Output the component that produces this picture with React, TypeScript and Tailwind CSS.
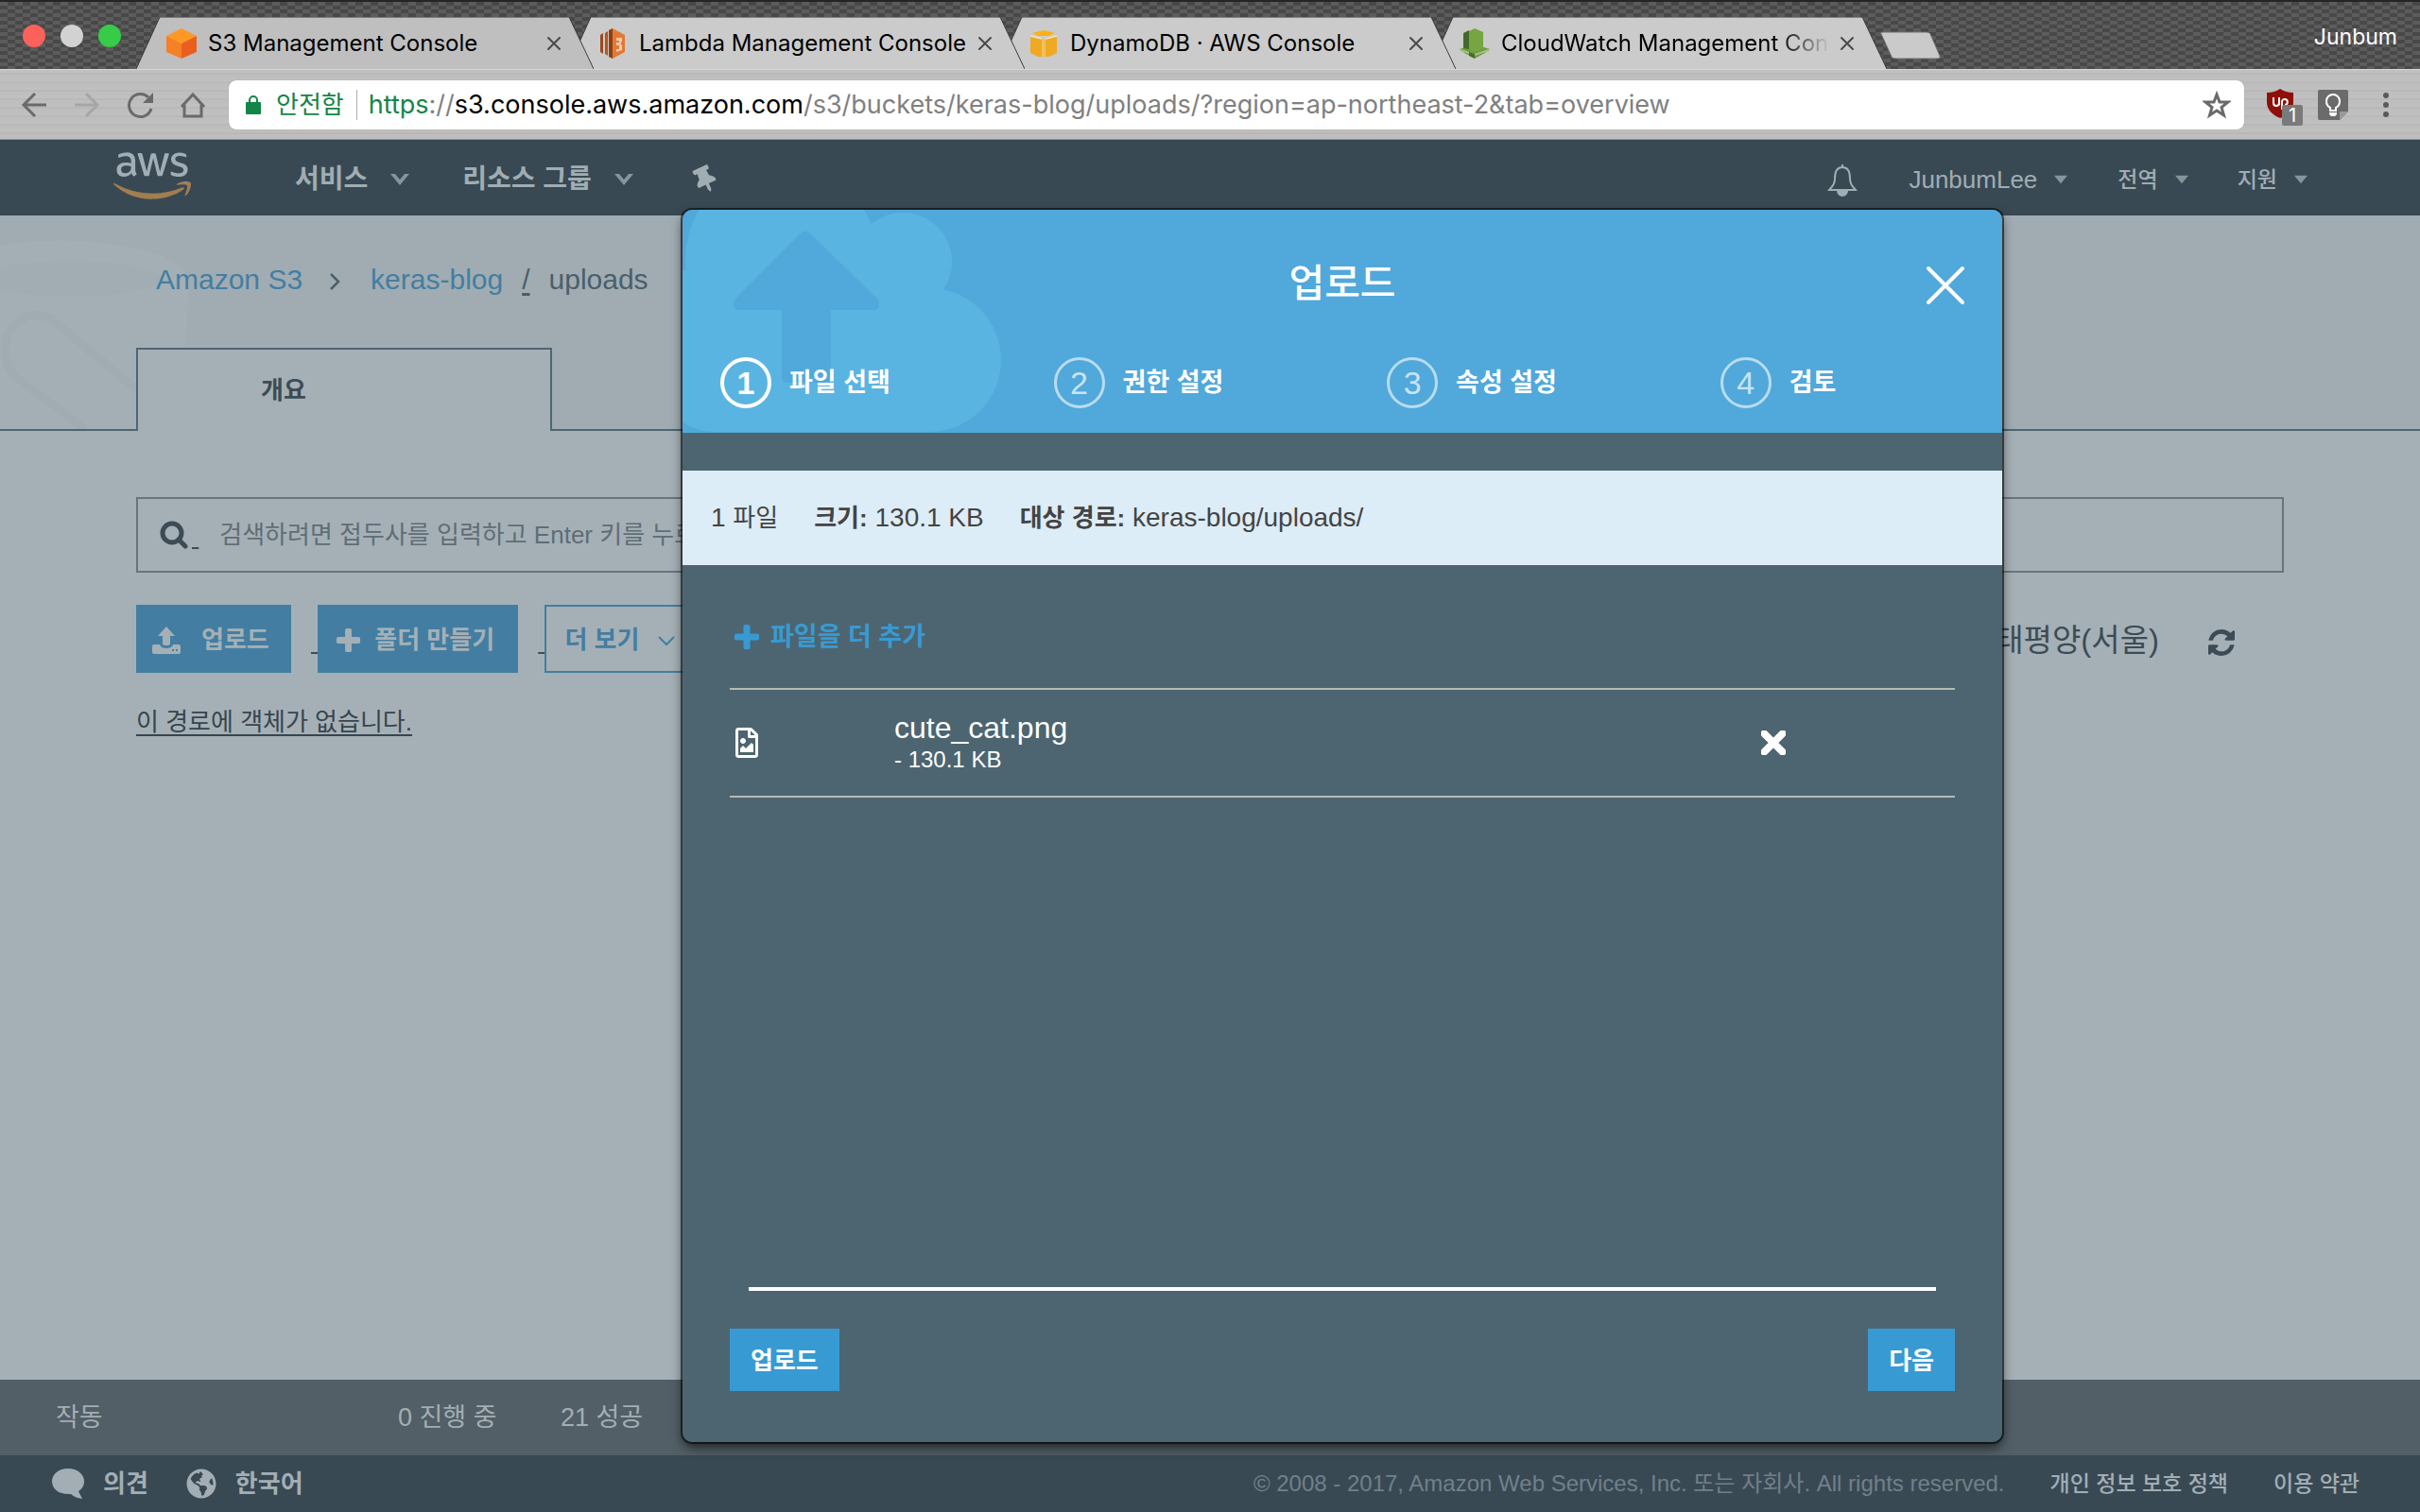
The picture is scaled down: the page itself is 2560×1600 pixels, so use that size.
import type { ReactNode } from "react";
import { FaAws, FaGlobeAmericas, FaRegFileImage, FaThumbtack } from "react-icons/fa";

const SANS = "font-['Liberation_Sans','Noto_Sans_CJK_KR',sans-serif]";
const CHROME = "font-['Inter','Noto_Sans_CJK_KR',sans-serif]";

/* ---------- icons ---------- */

function CubeIcon() {
  return (
    <svg viewBox="0 0 32 32" className="size-8">
      <path d="M16 0 32 8 16 16 0 8z" fill="#fd9827" />
      <path d="M0 8 16 16V32L0 25z" fill="#f58025" />
      <path d="M32 8 16 16V32L32 25z" fill="#ea5f1e" />
    </svg>
  );
}

function LambdaIcon() {
  return (
    <svg viewBox="0 0 32 32" className="size-8">
      <path d="M3 7 6 5V27L3 25z" fill="#9c4a1c" />
      <path d="M8 5 11 3V29L8 27z" fill="#b3561f" />
      <path d="M12 2 16 0V32L12 30z" fill="#8e3f14" />
      <path d="M16 0 29 7V25L16 32z" fill="#e27a35" />
      <path d="M20 10h6v4l-2 2 2 2v5l-6 2v-3h3v-4h-3v-3h3v-2h-3z" fill="#f7c9a8" />
    </svg>
  );
}

function DynamoIcon() {
  return (
    <svg viewBox="0 0 32 32" className="size-8">
      <path d="M2 8V26L10 30H22L30 26V8L22 11H10z" fill="#efa925" />
      <path d="M16 2 28 5 22 8H10L4 5z" fill="#fbb116" />
      <path d="M14 11h4v19h-4z" fill="#f5bf5c" />
      <path d="M2 8 14 11M30 8 18 11" stroke="#f8e0b0" strokeWidth="1.5" />
    </svg>
  );
}

function WatchIcon() {
  return (
    <svg viewBox="0 0 32 32" className="size-8">
      <path d="M0 22 16 17 32 22 27 26 16 32 5 26z" fill="#6f9a45" />
      <path d="M1 23 16 28 31 23" stroke="#a3c47d" strokeWidth="2" fill="none" />
      <path d="M4 5 10 2V22L4 21z" fill="#45692c" />
      <path d="M10 3 16 0 25 4V21L16 25 10 22z" fill="#76a641" />
      <path d="M16 27V32L10 29V25z" fill="#4b6a2b" />
    </svg>
  );
}

function CloseGlyph({ className, width }: { className: string; width: number }) {
  return (
    <svg viewBox="0 0 24 24" className={className} fill="none" stroke="currentColor" strokeWidth={width} strokeLinecap="round">
      <path d="M3 3 21 21M21 3 3 21" />
    </svg>
  );
}

function PlusIcon({ className }: { className: string }) {
  return (
    <svg viewBox="0 0 1408 1408" className={className} fill="currentColor">
      <path d="M1408 608v192q0 40-28 68t-68 28H896v416q0 40-28 68t-68 28H608q-40 0-68-28t-28-68V896H96q-40 0-68-28T0 800V608q0-40 28-68t68-28h416V96q0-40 28-68T608 0h192q40 0 68 28t28 68v416h416q40 0 68 28t28 68z" />
    </svg>
  );
}

function RefreshIcon() {
  return (
    <svg viewBox="0 0 1536 1536" className="size-7" fill="currentColor">
      <path d="M1511 928q0 5-1 7-64 268-268 434.5t-478 166.500q-146 0-282.500-55t-243.500-157l-129 129q-19 19-45 19t-45-19-19-45v-448q0-26 19-45t45-19h448q26 0 45 19t19 45-19 45l-137 137q71 66 161 102t187 36q134 0 250-65t186-179q11-17 53-117 8-23 30-23h192q13 0 22.500 9.500t9.500 22.500zm25-800v448q0 26-19 45t-45 19h-448q-26 0-45-19t-19-45 19-45l138-138q-148-137-349-137-134 0-250 65t-186 179q-11 17-53 117-8 23-30 23h-199q-13 0-22.500-9.500t-9.500-22.500v-7q65-268 270-434.500t480-166.500q146 0 284 55.500t245 156.500l130-129q19-19 45-19t45 19 19 45z" />
    </svg>
  );
}

function Caret({ small = false }: { small?: boolean }) {
  return (
    <svg viewBox="0 0 20 14" className={small ? "h-[10px] w-[14px]" : "h-[14px] w-5"} fill="#87949b">
      {small ? <path d="M0 1h20L10 13z" /> : <path d="M0 1h5l5 6 5-6h5L10 13z" />}
    </svg>
  );
}

/* ---------- browser window ---------- */

const TABS: { title: string; icon: ReactNode; z: string; fade?: boolean }[] = [
  { title: "S3 Management Console", icon: <CubeIcon />, z: "z-40" },
  { title: "Lambda Management Console", icon: <LambdaIcon />, z: "z-30" },
  { title: "DynamoDB · AWS Console", icon: <DynamoIcon />, z: "z-20" },
  { title: "CloudWatch Management Console", icon: <WatchIcon />, z: "z-10", fade: true },
];

function BrowserTabs() {
  return (
    <div className="relative flex h-[73px] items-end border-t-2 border-[#242424] bg-[#555] bg-[repeating-conic-gradient(#484848_0_25%,#5c5c5c_0_50%)] bg-size-[16px_8px]">
      <div className="flex w-[144px] shrink-0 gap-4 self-center pl-6">
        <button aria-label="닫기" className="size-6 rounded-full bg-[#fc615c]" />
        <button aria-label="최소화" className="size-6 rounded-full bg-[#d2d2d2]" />
        <button aria-label="최대화" className="size-6 rounded-full bg-[#36cc48]" />
      </div>
      <div role="tablist" className="flex">
        {TABS.map((tab, i) => (
          <div key={tab.title} className={`relative flex h-[55px] w-[484px] items-center pl-8 ${i ? "-ml-7" : ""} ${tab.z}`}>
            <svg viewBox="0 0 484 55" className="absolute inset-0 size-full" fill={i ? "#cbcbcb" : "#bfbfbf"}>
              <path d="M0 55 25 0H458L484 55z" />
              <path d="M0 55 25 0H458L484 55" fill="none" stroke="#3c3c3c" strokeWidth="1" />
            </svg>
            <button
              role="tab"
              aria-selected={i === 0}
              className={`relative flex w-[392px] items-center gap-3 whitespace-nowrap text-2xl text-black ${tab.fade ? "overflow-hidden mask-r-from-86%" : ""}`}
            >
              <span className="shrink-0">{tab.icon}</span>
              {tab.title}
            </button>
            <button aria-label="탭 닫기" className="relative ml-[10px] text-[#4a4a4a]">
              <CloseGlyph className="size-4" width={3} />
            </button>
          </div>
        ))}
      </div>
      <button aria-label="새 탭" className="-ml-2 mb-[10px]">
        <svg viewBox="0 0 66 30" className="h-[30px] w-[66px]">
          <path d="M3 1H50Q53 1 54 3L64 26Q65 29 61 29H17Q14 29 13 27L2 3Q1 1 3 1z" fill="#cacaca" stroke="#6e6e6e" />
        </svg>
      </button>
      <span className="ml-auto self-center pt-1 pr-6 text-[23px] text-white">Junbum</span>
    </div>
  );
}

function Toolbar() {
  return (
    <div className="flex h-[75px] items-center border-t border-b border-t-[#d6d6d6] border-b-[#8f8f8f] bg-[#bcbcbc] bg-[repeating-linear-gradient(180deg,#c0c0c0_0_3px,#b9b9b9_3px_5px,#bebebe_5px_9px)] pr-8 pl-5 text-[#6a6a6a]">
      <div className="flex w-[222px] shrink-0 items-center gap-6">
        <button aria-label="뒤로">
          <svg viewBox="0 0 32 32" className="size-8" fill="none" stroke="currentColor" strokeWidth="3">
            <path d="M29 16H5M17 4 5 16 17 28" />
          </svg>
        </button>
        <button aria-label="앞으로" className="text-[#a6a6a6]">
          <svg viewBox="0 0 32 32" className="size-8" fill="none" stroke="currentColor" strokeWidth="3">
            <path d="M3 16H27M15 4 27 16 15 28" />
          </svg>
        </button>
        <button aria-label="새로고침">
          <svg viewBox="0 0 32 32" className="size-8">
            <path d="M28 20A12 12 0 1 1 25 8" fill="none" stroke="currentColor" strokeWidth="3" />
            <path d="M30 3V14H19z" fill="currentColor" />
          </svg>
        </button>
        <button aria-label="홈">
          <svg viewBox="0 0 32 32" className="size-8" fill="none" stroke="currentColor" strokeWidth="3">
            <path d="M4 18 16 5 28 18M7 16V28H25V16" />
          </svg>
        </button>
      </div>
      <div className="flex h-[52px] flex-1 items-center rounded-lg bg-white pr-[14px] pl-[18px] shadow-[0_0_1px_#777]">
        <svg viewBox="0 0 16 22" className="h-[22px] w-4">
          <rect y="8" width="16" height="13" rx="1" fill="#138548" />
          <path d="M4 9V6a4 4 0 0 1 8 0V9" fill="none" stroke="#138548" strokeWidth="2" />
        </svg>
        <span className="ml-4 text-[26px] text-[#138548]">안전함</span>
        <span className="ml-[13px] h-8 w-px bg-[#b0b0b0]" />
        <span className="ml-3 flex-1 pt-px text-[27px] whitespace-nowrap text-[#808080]">
          <span className="text-[#138548]">https</span>://<span className="text-black">s3.console.aws.amazon.com</span>
          /s3/buckets/keras-blog/uploads/?region=ap-northeast-2&amp;tab=overview
        </span>
        <button aria-label="북마크">
          <svg viewBox="0 0 30 30" className="size-[30px]" fill="none" stroke="#6a6a6a" strokeWidth="3">
            <path d="M15 4 18 12H27L20 17.500 22.500 26 15 21 7.500 26 10 17.500 3 12H12z" />
          </svg>
        </button>
      </div>
      <button aria-label="uBlock Origin" className="mt-1 ml-6">
        <svg viewBox="0 0 38 40" className="h-10 w-[38px]">
          <path d="M0 5Q8 5 14 1 20 5 28 5V15Q28 26 14 32 0 26 0 15z" fill="#8e1009" />
          <path d="M7 10V16Q7 19 10 19T13 16V10M13 18V10M16 23V14A3 3 0 1 1 19 18" fill="none" stroke="#fff" strokeWidth="2" />
          <rect x="16" y="18" width="22" height="22" rx="2" fill="#7a7a7a" />
          <text x="27" y="36" textAnchor="middle" fontSize="20" fill="#fff">1</text>
        </svg>
      </button>
      <button aria-label="Google Keep" className="ml-4">
        <svg viewBox="0 0 32 32" className="size-8">
          <path d="M2 0H30Q32 0 32 2V23L23 32H2Q0 32 0 30V2Q0 0 2 0z" fill="#6b6b6b" />
          <path d="M23 32V23H32z" fill="#999" />
          <path d="M13 22V19Q9 17 9 12A7 7 0 0 1 23 12Q23 17 19 19V22z" fill="none" stroke="#fff" strokeWidth="2" />
          <path d="M12 24H20V26L18 28H14L12 26z" fill="#fff" />
        </svg>
      </button>
      <button aria-label="메뉴" className="ml-9">
        <svg viewBox="0 0 8 28" className="h-7 w-2" fill="#5a5a5a">
          <circle cx="4" cy="4" r="3" />
          <circle cx="4" cy="14" r="3" />
          <circle cx="4" cy="24" r="3" />
        </svg>
      </button>
    </div>
  );
}

/* ---------- AWS console ---------- */

function AwsLogo() {
  return (
    <a href="#home" aria-label="AWS" className="mb-2 flex w-[82px] flex-col">
      <span className="h-10 overflow-hidden text-[#a1aeb5]">
        <FaAws className="h-[66px] w-[82px]" />
      </span>
      <span className="flex h-[26px] flex-col justify-end overflow-hidden text-[#a37d4e]">
        <FaAws className="h-[66px] w-[82px] shrink-0" />
      </span>
    </a>
  );
}

function ConsoleHeader() {
  return (
    <header className="flex h-20 items-center bg-[#384954] pt-1 pr-[119px] pl-[120px] text-[#a0adb3] [text-shadow:0_2px_0_#28353e]">
      <AwsLogo />
      <button className="ml-[110px] flex items-center gap-6 text-[28px] font-bold">서비스<Caret /></button>
      <button className="ml-[56px] flex items-center gap-6 text-[28px] font-bold">리소스 그룹<Caret /></button>
      <button aria-label="고정" className="ml-[62px]">
        <FaThumbtack className="size-7 -rotate-[25deg]" />
      </button>
      <button aria-label="알림" className="ml-auto">
        <svg viewBox="0 0 32 36" className="h-9 w-8" fill="none" stroke="currentColor" strokeWidth="2">
          <path d="M16 2V5M16 5C9 5 8 11 8 17 8 24 5 25 2 29H30C27 25 24 24 24 17 24 11 23 5 16 5z" />
          <path d="M11 30A5 5 0 0 0 21 30z" fill="currentColor" />
        </svg>
      </button>
      <button className="ml-[54px] flex items-center gap-[18px] text-[26px]">JunbumLee<Caret small /></button>
      <button className="ml-[53px] flex items-center gap-[18px] text-[23px] font-medium">전역<Caret small /></button>
      <button className="ml-[52px] flex items-center gap-[18px] text-[23px] font-medium">지원<Caret small /></button>
    </header>
  );
}

function BucketHeader() {
  return (
    <section className="relative bg-[#a0acb2]">
      <svg viewBox="0 0 210 226" className="absolute top-0 left-0 h-[226px] w-[210px]">
        <path d="M0 32Q70 20 140 34 200 46 200 74L190 226H0z" fill="#a4afb5" />
        <ellipse cx="75" cy="67" rx="95" ry="19" fill="#a1adb2" />
        <path d="M145 185 55 110Q28 95 8 125 0 150 15 170L90 226" fill="none" stroke="#a0acb2" strokeWidth="9" />
      </svg>
      <nav className="relative flex pt-11 pb-12 pl-[165px] text-[30px] leading-[48px] text-[#4a5f6b]">
        <a href="#s3" className="text-[#437ea2]">Amazon S3</a>
        <svg viewBox="0 0 12 20" className="mt-4 ml-7 h-5 w-3" fill="none" stroke="currentColor" strokeWidth="2.500">
          <path d="M2 2 10 10 2 18" />
        </svg>
        <a href="#bucket" className="ml-8 text-[#437ea2]">keras-blog</a>
        <span className="ml-5 underline underline-offset-4">/</span>
        <span className="ml-5">uploads</span>
      </nav>
      <div className="flex border-b-2 border-[#4d6672] pl-[144px]">
        <button className="relative -mb-[2px] flex h-[88px] w-[440px] items-center border-2 border-b-0 border-[#4d6672] bg-[#a5b0b6] pl-[130px] text-[26px] font-bold text-[#3c4c55]">
          개요
        </button>
      </div>
    </section>
  );
}

function Actions() {
  return (
    <div className="mt-[34px] flex h-[72px] items-stretch text-[26px] text-[#3c4c55]">
      <button className="flex w-[164px] items-center gap-[22px] bg-[#437ea2] pt-[3px] pl-[17px] font-bold text-[#a5b0b6]">
        <svg viewBox="0 0 30 30" className="size-[30px]" fill="currentColor">
          <path d="M15 0 24 10H19V18Q19 20 15 20T11 18V10H6z" />
          <path d="M2 19H8Q9 23 15 23T22 19H28Q30 19 30 21V27Q30 29 28 29H2Q0 29 0 27V21Q0 19 2 19z" />
          <path d="M21 24h2v2h-2zM25 24h2v2h-2z" fill="#437ea2" />
        </svg>
        업로드
      </button>
      <span className="ml-[21px] self-center pt-[3px] underline underline-offset-4">&nbsp;</span>
      <button className="flex w-[212px] items-center gap-[15px] bg-[#437ea2] pt-[3px] pl-[20px] font-bold text-[#a5b0b6]">
        <PlusIcon className="size-[25px]" />
        폴더 만들기
      </button>
      <span className="ml-[21px] self-center pt-[3px] underline underline-offset-4">&nbsp;</span>
      <button className="flex w-[164px] items-center gap-5 border-2 border-[#437ea2] pt-[3px] pl-[19px] font-bold text-[#437ea2]">
        더 보기
        <svg viewBox="0 0 18 12" className="h-3 w-[18px]" fill="none" stroke="currentColor" strokeWidth="2">
          <path d="M1 2 9 10 17 2" />
        </svg>
      </button>
      <span className="ml-auto self-center pt-[3px] text-[33px]">아시아 태평양(서울)</span>
      <button aria-label="새로고침" className="mx-[52px] pt-2">
        <RefreshIcon />
      </button>
    </div>
  );
}

function BucketBody() {
  return (
    <main className="flex-1 bg-[#a5b0b6] px-[144px] pt-[70px]">
      <label className="flex h-20 items-center border-2 border-[#67757c] pl-[23px] text-[26px] text-[#3c4c55]">
        <svg viewBox="0 0 30 30" className="size-[30px]" fill="none" stroke="currentColor" strokeWidth="5">
          <circle cx="13" cy="13" r="10" />
          <path d="M20 20 27 27" strokeLinecap="round" />
        </svg>
        <span className="ml-1 underline underline-offset-4">&nbsp;</span>
        <input
          aria-label="검색"
          placeholder="검색하려면 접두사를 입력하고 Enter 키를 누르십시오."
          className="ml-[22px] flex-1 bg-transparent outline-none placeholder:text-[#5f6d75]"
        />
      </label>
      <Actions />
      <p className="mt-8 text-[26px] leading-10 text-[#36454e] underline underline-offset-4">이 경로에 객체가 없습니다.</p>
    </main>
  );
}

function Footer() {
  return (
    <footer className="text-[#a3aeb4]">
      <div className="flex h-20 items-center bg-[#525f66] pl-[59px] text-[27px]">
        <span className="w-[362px]">작동</span>
        <span className="w-[172px] whitespace-nowrap">0 진행 중</span>
        <span>21 성공</span>
      </div>
      <div className="flex h-[60px] items-center bg-[#384954] pr-16 pl-[55px] text-[23px] font-medium whitespace-nowrap">
        <button className="flex items-center gap-5 text-[26px] font-bold">
          <svg viewBox="0 0 34 32" className="h-8 w-[34px]" fill="currentColor">
            <path d="M17 0C27 0 34 6 34 13.500 34 19 31 22 28 24L32 32Q24 31 20 27C8 28 0 22 0 13.500 0 6 7 0 17 0z" />
          </svg>
          의견
        </button>
        <button className="ml-10 flex items-center gap-5 text-[26px] font-bold">
          <FaGlobeAmericas className="size-8" />
          한국어
        </button>
        <span className="ml-auto text-2xl font-normal text-[#728089]">
          © 2008 - 2017, Amazon Web Services, Inc. 또는 자회사. All rights reserved.
        </span>
        <a href="#privacy" className="ml-12">개인 정보 보호 정책</a>
        <a href="#terms" className="ml-12">이용 약관</a>
      </div>
    </footer>
  );
}

/* ---------- upload dialog ---------- */

const STEPS = ["파일 선택", "권한 설정", "속성 설정", "검토"];

function DialogHeader() {
  return (
    <header className="relative overflow-hidden bg-[#51a8da] pt-[46px] pb-[26px] text-white">
      <svg viewBox="0 0 340 236" className="absolute top-0 left-0 h-[236px] w-[340px]" fill="#5ab4e1">
        <circle cx="105" cy="53" r="102" />
        <circle cx="233" cy="55" r="52" />
        <circle cx="261" cy="159" r="76" />
        <circle cx="38" cy="159" r="76" />
        <path d="M0 64H261V235H38Q15 235 0 225z" />
        <path
          d="M125 25Q130 20 135 25L207 95Q210 106 202 106H157V177Q157 183 151 183H111Q105 183 105 177V106H60Q52 106 55 95z"
          fill="#51a8da"
        />
      </svg>
      <h2 className="relative text-center text-[41px] leading-[64px] font-medium">업로드</h2>
      <button aria-label="닫기" className="absolute top-[56px] right-9">
        <CloseGlyph className="size-12" width={2} />
      </button>
      <ol className="relative mt-[46px] flex pl-10">
        {STEPS.map((step, i) => (
          <li key={step} className="flex w-[26%] shrink-0 items-center gap-[19px] text-[27px] font-bold whitespace-nowrap last:w-auto">
            <span
              className={
                i === 0
                  ? "flex size-[54px] items-center justify-center rounded-full border-4 border-white text-[34px]"
                  : "flex size-[54px] items-center justify-center rounded-full border-3 border-[#b9dcf1] text-[34px] font-normal text-[#c8e4f4]"
              }
            >
              {i + 1}
            </span>
            {step}
          </li>
        ))}
      </ol>
    </header>
  );
}

function UploadDialog() {
  return (
    <div className={`absolute inset-0 flex pt-[222px] pr-[442px] pb-[74px] pl-[722px] ${SANS}`}>
      <div
        role="dialog"
        aria-label="업로드"
        className="z-50 flex flex-1 flex-col overflow-hidden rounded-[10px] bg-[#4d6571] text-white shadow-[0_0_0_2px_rgba(0,0,0,0.55),0_6px_12px_rgba(0,0,0,0.6)]"
      >
        <DialogHeader />
        <div className="mt-10 flex h-[100px] items-center bg-[#ddedf7] pl-[30px] text-[28px] whitespace-nowrap text-[#444]">
          <span>1 <span className="text-[26px]">파일</span></span>
          <span className="ml-[38px]"><b className="text-[26px]">크기:</b> 130.1 KB</span>
          <span className="ml-[38px]"><b className="text-[26px]">대상 경로:</b> keras-blog/uploads/</span>
        </div>
        <div className="mx-[50px]">
          <div className="flex h-[130px] items-center pt-[22px] pl-[5px]">
            <button className="flex items-center gap-3 text-[27px] font-bold text-[#389ad3]">
              <PlusIcon className="size-[26px]" />
              파일을 더 추가
            </button>
          </div>
          <ul className="border-y-2 border-[#b5bab4]">
            <li className="flex h-28 items-center pl-1">
              <FaRegFileImage className="h-8 w-7" />
              <div className="ml-[142px]">
                <div className="text-[32px] leading-9">cute_cat.png</div>
                <div className="text-2xl leading-8">- 130.1 KB</div>
              </div>
              <button aria-label="삭제" className="mr-[179px] ml-auto">
                <CloseGlyph className="size-[26px]" width={7} />
              </button>
            </li>
          </ul>
        </div>
        <div className="mx-[70px] mt-auto h-1 bg-white" />
        <div className="mx-[50px] mt-10 mb-[54px] flex justify-between text-[26px] font-bold">
          <button className="h-[66px] bg-[#389ad3] px-[22px] pt-[2px]">업로드</button>
          <button className="h-[66px] bg-[#389ad3] px-[22px] pt-[2px]">다음</button>
        </div>
      </div>
    </div>
  );
}

export default function App() {
  return (
    <div className="relative flex min-h-screen flex-col">
      <div className={CHROME}>
        <BrowserTabs />
        <Toolbar />
      </div>
      <div className={`flex flex-1 flex-col ${SANS}`}>
        <ConsoleHeader />
        <BucketHeader />
        <BucketBody />
        <Footer />
      </div>
      <UploadDialog />
    </div>
  );
}
